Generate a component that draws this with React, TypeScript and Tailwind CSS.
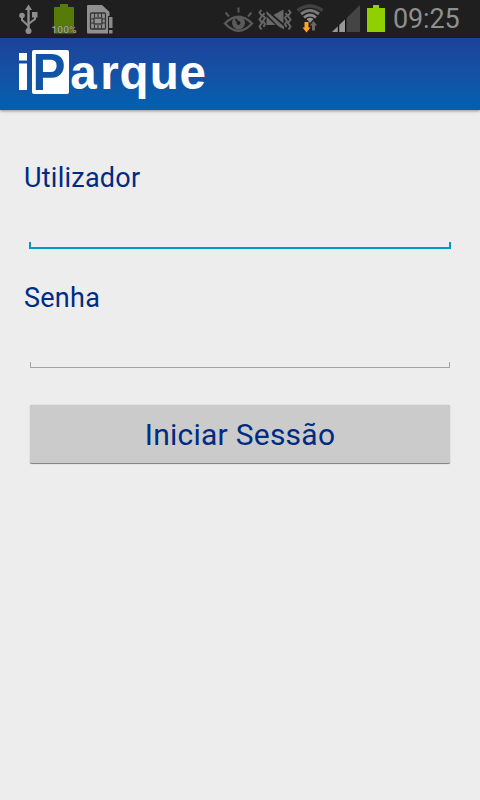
import React from 'react';

function NotificationIcons() {
  return (
    <div className="flex h-[38px] items-start">
      {/* USB */}
      <svg className="ml-[18px] mt-[4px] h-[31px] w-[21px]" viewBox="0 0 21 31" fill="none" stroke="#8e8e8e" strokeWidth="2">
        <path d="M10.5 5V26" strokeWidth="2.4" />
        <path d="M10.5 0.5L14 6H7Z" fill="#8e8e8e" stroke="none" />
        <path d="M4 12V16L10.5 22M17 12V15L10.5 20" />
        <circle cx="4" cy="11.5" r="2.8" fill="#8e8e8e" stroke="none" />
        <rect x="14" y="8" width="5.5" height="5.5" fill="#8e8e8e" stroke="none" />
        <circle cx="10.5" cy="27" r="3" fill="#8e8e8e" stroke="none" />
      </svg>
      {/* Charged battery */}
      <svg className="ml-[12px] mt-[4px] h-[31px] w-[27px]" viewBox="0 0 27 31">
        <path d="M3 3H9V0H17V3H23V29.500H3Z" fill="#567b09" />
        <text x="0.500" y="28.500" textLength="25" lengthAdjust="spacingAndGlyphs" fontFamily="Roboto, sans-serif" fontSize="9.500" fontWeight="500" fill="#a2a2a2" stroke="#3e4a2a" strokeWidth="0.600" paintOrder="stroke">100%</text>
      </svg>
      {/* SIM card */}
      <svg className="ml-[9px] mt-[5px] h-[30px] w-[27px]" viewBox="0 0 27 30">
        <path d="M1 0H15L22.500 7V11H21V28.500H1Q0 28.500 0 27V1Q0 0 1 0Z" fill="#909090" />
        <rect x="3.500" y="8" width="15" height="16" rx="1" fill="none" stroke="#333" strokeWidth="1.300" />
        <path d="M7.500 8V12M11 8V12M14.500 8V12M7.500 20V24M11 20V24M14.500 20V24M4 14H7M4 18H7M15 14H18M15 18H18" stroke="#333" strokeWidth="1.100" />
        <rect x="7" y="13" width="8" height="6" fill="none" stroke="#333" strokeWidth="1.300" />
        <path d="M22 12H25.500V23H22ZM22 25H25.500V28.500H22Z" fill="#8a8a8a" />
      </svg>
    </div>
  );
}

function SystemIcons() {
  return (
    <div className="ml-auto flex h-[38px] items-start">
      {/* Smart stay eye */}
      <svg className="mt-[6px] h-[27px] w-[31px]" viewBox="0 0 31 27" fill="none" stroke="#595959">
        <path d="M2 17.500Q15.500 4 29 17.500Q15.500 32 2 17.500Z" strokeWidth="2.400" />
        <circle cx="15.500" cy="17" r="6.500" fill="#5a5a5a" stroke="none" />
        <circle cx="15.500" cy="17" r="2" fill="#1f1f1f" stroke="none" />
        <path d="M15.500 17L12.500 13" stroke="#1f1f1f" strokeWidth="1.800" />
        <path d="M2.500 6.500L6 10.500M15.500 1.500V6.500M28.500 6.500L25 10.500" strokeWidth="2" />
      </svg>
      {/* Muted with vibration */}
      <svg className="ml-[4px] mt-[9px] h-[22px] w-[34px]" viewBox="0 0 34 22" fill="none" stroke="#656565" strokeWidth="2">
        <path d="M3.500 1L1.500 3.500L4 7L1.500 10.500L4 14L1.500 17.500L3.500 20.500M6.500 4L5 6L7 9L5 12L7 15L5.500 18" />
        <path d="M30.500 1L32.500 3.500L30 7L32.500 10.500L30 14L32.500 17.500L30.500 20.500M27.500 4L29 6L27 9L29 12L27 15L28.500 18" />
        <g fill="#686868" stroke="none">
          <path d="M8.500 2L26 17.500V20.500L20 17L8.500 5Z" />
          <path d="M8.500 7.500L17.500 16H8.500Z" />
          <path d="M15.500 6L25.500 0.500V14.500Z" />
        </g>
      </svg>
      {/* Wi-Fi with traffic arrows */}
      <svg className="ml-[4px] mt-[4px] h-[29px] w-[28px]" viewBox="0 0 28 29" fill="none">
        <path d="M1.500 6.500Q14 -2.500 26.500 6.500" stroke="#414141" strokeWidth="3.400" />
        <path d="M5 10Q14 3 23 10" stroke="#777" strokeWidth="3" />
        <path d="M8 13.500Q14 8.500 20 13.500" stroke="#888" strokeWidth="2.800" />
        <path d="M10.500 15Q14 12.500 17.500 15L14 19Z" fill="#929292" />
        <path d="M8.500 18H12.500V23.500H14.500L10.500 28.500L6.500 23.500H8.500Z" fill="#ffa229" />
        <path d="M16 26.500V21.500H13.800L17.500 17L21.200 21.500H19V26.500Z" fill="#696969" />
      </svg>
      {/* Mobile signal */}
      <svg className="ml-[8px] mt-[5px] h-[27px] w-[28px]" viewBox="0 0 28 27">
        <path d="M0 27L28 0V27Z" fill="#444" />
        <path d="M0 27L14 13.500V27Z" fill="#989898" />
        <path d="M6.500 20V27M13.700 13V27" stroke="#111" strokeWidth="1.400" />
      </svg>
      {/* Battery */}
      <svg className="ml-[7px] mt-[5px] h-[27px] w-[18px]" viewBox="0 0 18 27">
        <path d="M0 3H6V0H12V3H18V27H0Z" fill="#91d000" />
      </svg>
      <span className="ml-[8px] mr-[20px] mt-[1px] w-[67px] whitespace-nowrap text-[27px] leading-[37px] tracking-[-0.15px] text-[#8f8f8f]">09:25</span>
    </div>
  );
}

function Logo() {
  return (
    <svg className="ml-[18px] h-[72px] w-[190px]" viewBox="18 38 190 72" fontFamily="'Liberation Sans', Arial, sans-serif" fontWeight="700">
      <path d="M19 53H27V60.500H19ZM19 63.500H27V90H19Z" fill="#fff" />
      <rect x="32" y="50" width="37" height="44" rx="2" fill="#fff" />
      <text x="32.500" y="89.500" fontSize="51" textLength="33" lengthAdjust="spacingAndGlyphs" fill="#1153a5">P</text>
      <text x="70.300 100.300 119.500 149.800 179.500" y="89.300" fontSize="47.500" fill="#fff">arque</text>
    </svg>
  );
}

function Field({ label, type, focused }: { label: string; type: string; focused?: boolean }) {
  return (
    <label className="flex h-[120px] flex-col">
      <span className="ml-[24px] h-[36px] whitespace-nowrap text-[27px] leading-[36px] tracking-[0.25px]">{label}</span>
      <span
        className={
          focused
            ? 'relative mx-[29px] mt-[11px] block h-[42px] border-b-2 border-[#0099cc]'
            : 'relative mx-[30px] mt-[11px] block h-[41px] border-b border-[#a3a3a3]'
        }
      >
        <input type={type} className="h-full w-full bg-transparent px-3 outline-none" />
        <span
          className={
            focused
              ? 'pointer-events-none absolute inset-x-0 bottom-0 h-[5px] border-x-2 border-[#0099cc]'
              : 'pointer-events-none absolute inset-x-0 bottom-0 h-[5px] border-x border-[#a3a3a3]'
          }
        />
      </span>
    </label>
  );
}

export default function App() {
  return (
    <div className="flex h-[800px] w-[480px] flex-col overflow-hidden bg-[#ededed] font-[Roboto,sans-serif] text-[#002b82]">
      <div className="flex h-[38px] shrink-0 bg-[#1f1f1f]">
        <NotificationIcons />
        <SystemIcons />
      </div>
      <header className="flex h-[72px] shrink-0 bg-linear-to-b from-[#1c4299] to-[#0061b0] shadow-[0_1px_3px_rgba(0,0,0,0.4)]">
        <Logo />
      </header>
      <main className="flex flex-col pt-[50px]">
        <Field label="Utilizador" type="text" focused />
        <Field label="Senha" type="password" />
        <button className="mx-[30px] mt-[5px] h-[59px] rounded-[2px] border-b border-[#858585] bg-[#cbcbcb] pt-[2px] text-[30px] leading-[56px] tracking-[0.25px] shadow-[0_0_1px_rgba(0,0,0,0.4)]">
          Iniciar Sessão
        </button>
      </main>
    </div>
  );
}
